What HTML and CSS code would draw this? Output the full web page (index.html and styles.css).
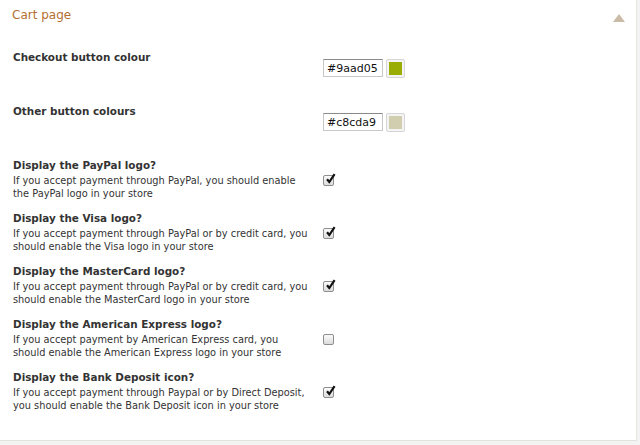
FILE: index.html
```html
<!DOCTYPE html>
<html lang="en">
<head>
    <meta charset="UTF-8">
    <title>Cart page</title>
    <link rel="stylesheet" href="styles.css">
</head>
<body>
    <div class="panel">
        <div class="panel-head">
            <span class="panel-title">Cart page</span>
            <span class="toggle"></span>
        </div>

        <div class="panel-body">
            <div class="row colour-row">
                <div class="label"><h4>Checkout button colour</h4></div>
                <div class="control">
                    <input type="text" class="hex" value="#9aad05">
                    <span class="swatch"><span class="swatch-fill green"></span></span>
                </div>
            </div>

            <div class="row colour-row">
                <div class="label"><h4>Other button colours</h4></div>
                <div class="control">
                    <input type="text" class="hex" value="#c8cda9">
                    <span class="swatch"><span class="swatch-fill sand"></span></span>
                </div>
            </div>

            <div class="row option">
                <div class="label">
                    <h4>Display the PayPal logo?</h4>
                    <p>If you accept payment through PayPal, you should enable the PayPal logo in your store</p>
                </div>
                <div class="control"><span class="check on"><svg viewBox="0 0 12 12"><path d="M3 6.2 L5.3 9 L10.6 1.2"/></svg></span></div>
            </div>

            <div class="row option">
                <div class="label">
                    <h4>Display the Visa logo?</h4>
                    <p>If you accept payment through PayPal or by credit card, you should enable the Visa logo in your store</p>
                </div>
                <div class="control"><span class="check on"><svg viewBox="0 0 12 12"><path d="M3 6.2 L5.3 9 L10.6 1.2"/></svg></span></div>
            </div>

            <div class="row option">
                <div class="label">
                    <h4>Display the MasterCard logo?</h4>
                    <p>If you accept payment through PayPal or by credit card, you should enable the MasterCard logo in your store</p>
                </div>
                <div class="control"><span class="check on"><svg viewBox="0 0 12 12"><path d="M3 6.2 L5.3 9 L10.6 1.2"/></svg></span></div>
            </div>

            <div class="row option">
                <div class="label">
                    <h4>Display the American Express logo?</h4>
                    <p>If you accept payment by American Express card, you should enable the American Express logo in your store</p>
                </div>
                <div class="control"><span class="check"></span></div>
            </div>

            <div class="row option">
                <div class="label">
                    <h4>Display the Bank Deposit icon?</h4>
                    <p>If you accept payment through Paypal or by Direct Deposit, you should enable the Bank Deposit icon in your store</p>
                </div>
                <div class="control"><span class="check on"><svg viewBox="0 0 12 12"><path d="M3 6.2 L5.3 9 L10.6 1.2"/></svg></span></div>
            </div>
        </div>
    </div>
</body>
</html>
```

FILE: styles.css
```css
body {
    margin: 0;
    padding: 0;
    background: #f3f3f3;
    font-family: 'DejaVu Sans', Verdana, sans-serif;
    color: #333;
}

.panel {
    width: 637px;
    height: 441px;
    box-sizing: border-box;
    background: #fff;
    border-right: 1px solid #e6e6e0;
    border-bottom: 1px solid #e2e2dc;
}

.panel-head {
    display: flex;
    justify-content: space-between;
    align-items: center;
    height: 30px;
    padding: 0 11px 0 12px;
}

.panel-title {
    font-size: 12px;
    color: #b36f33;
}

.toggle {
    width: 0;
    height: 0;
    border-left: 6px solid transparent;
    border-right: 6px solid transparent;
    border-bottom: 8px solid #c9bba7;
    margin-top: 6px;
}

.panel-body {
    padding: 20px 0 0 13px;
}

.row {
    display: flex;
}

.label {
    width: 299px;
    margin-right: 11px;
}

.label h4 {
    margin: 0;
    font-size: 10.4px;
    font-weight: bold;
    line-height: 14px;
}

.label p {
    margin: 3px 0 0;
    font-size: 9.8px;
    line-height: 12.5px;
}

.control {
    display: flex;
    gap: 3px;
}

.colour-row {
    height: 54px;
}

.colour-row .control {
    padding-top: 9px;
}

.hex {
    width: 60px;
    height: 18px;
    box-sizing: border-box;
    border: 1px solid #c8c8c8;
    border-top-color: #8a8a8a;
    padding: 0 3px;
    font-family: inherit;
    font-size: 11px;
    color: #111;
}

.swatch {
    width: 19px;
    height: 19px;
    box-sizing: border-box;
    border: 1px solid #d6d6d6;
    border-radius: 2px;
    padding: 2px;
    background: #f4f4f4;
}

.swatch-fill {
    display: block;
    width: 100%;
    height: 100%;
}

.green { background: #9aad05; }
.sand { background: #d1cdaf; }

.option {
    height: 53px;
}

.option .control {
    padding-top: 17px;
}

.check {
    width: 9px;
    height: 9px;
    border: 1px solid #8e8e8e;
    border-radius: 2px;
    background: linear-gradient(#fbfbfb, #dcdcdc);
    position: relative;
}

.check svg {
    position: absolute;
    left: 0;
    top: -3px;
    width: 12px;
    height: 12px;
    fill: none;
    stroke: #111;
    stroke-width: 2.2;
}
```
